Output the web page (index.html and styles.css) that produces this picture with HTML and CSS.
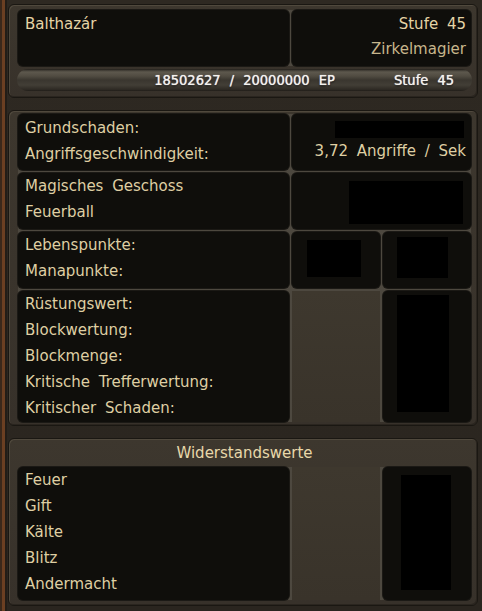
FILE: index.html
```html
<!DOCTYPE html>
<html lang="de">
<head>
<meta charset="utf-8">
<title>Charakter</title>
<link rel="stylesheet" href="styles.css">
</head>
<body>
<div class="page">
  <section class="frame head">
    <div class="head-grid">
      <div class="box name">Balthazár</div>
      <div class="box level">
        <div class="line">Stufe 45</div>
        <div class="line cls">Zirkelmagier</div>
      </div>
    </div>
    <div class="xpbar">
      <span class="xp">18502627 / 20000000 EP</span>
      <span class="lvl">Stufe 45</span>
    </div>
  </section>

  <section class="frame stats">
    <div class="grid">
      <div class="box left first">
        <div class="line">Grundschaden:</div>
        <div class="line">Angriffsgeschwindigkeit:</div>
      </div>
      <div class="box wide vals first">
        <div class="line"><div class="redact r1"></div></div>
        <div class="line">3,72 Angriffe / Sek</div>
      </div>

      <div class="box left">
        <div class="line">Magisches Geschoss</div>
        <div class="line">Feuerball</div>
      </div>
      <div class="box wide vals"><div class="redact r2"></div></div>

      <div class="box left">
        <div class="line">Lebenspunkte:</div>
        <div class="line">Manapunkte:</div>
      </div>
      <div class="box small"><div class="redact r3"></div></div>
      <div class="box small"><div class="redact r4"></div></div>

      <div class="box left">
        <div class="line">Rüstungswert:</div>
        <div class="line">Blockwertung:</div>
        <div class="line">Blockmenge:</div>
        <div class="line">Kritische Trefferwertung:</div>
        <div class="line">Kritischer Schaden:</div>
      </div>
      <div class="empty"></div>
      <div class="box small"><div class="redact r5"></div></div>
    </div>
  </section>

  <section class="frame resist">
    <div class="title">Widerstandswerte</div>
    <div class="grid rgrid">
      <div class="box left">
        <div class="line">Feuer</div>
        <div class="line">Gift</div>
        <div class="line">Kälte</div>
        <div class="line">Blitz</div>
        <div class="line">Andermacht</div>
      </div>
      <div class="empty"></div>
      <div class="box small"><div class="redact r6"></div></div>
    </div>
  </section>
</div>
</body>
</html>
```

FILE: styles.css
```css
html, body {
  margin: 0;
  padding: 0;
}
body {
  width: 482px;
  height: 611px;
  overflow: hidden;
  background:
    linear-gradient(to right, #3a281b 0, #3a281b 2px, #6b3f22 2px, #6b3f22 5px, #231d17 5px, #231d17 7px, transparent 7px),
    linear-gradient(#2e2922, #2a251f);
  font-family: "DejaVu Sans", "Liberation Sans", sans-serif;
  font-size: 15px;
  color: #dfcfa3;
  word-spacing: 4px;
}
.page {
  padding: 4px 4px 0 8px;
}
.frame {
  box-sizing: border-box;
  width: 470px;
  border: 1px solid #1a1712;
  border-radius: 6px;
  background: linear-gradient(#3d372e, #37312a);
  box-shadow: inset 1px 1px 0 #50493d, inset -1px -1px 0 #2a251f;
}
.head {
  padding: 5px 6px 6px 9px;
}
.head-grid {
  display: grid;
  grid-template-columns: 271px 1fr;
  gap: 3px;
  height: 56px;
  background: #4d483f;
  border-radius: 5px;
}
.box {
  background: #0f0e0b;
  border-radius: 5px;
  box-shadow: 0 0 0 1px #1b1915;
}
.name {
  padding: 2px 7px 0;
  line-height: 25px;
  color: #e5d4a6;
}
.level {
  padding: 2px 5px 0;
  text-align: right;
}
.level .line {
  line-height: 25px;
  color: #e5d4a6;
}
.level .cls {
  color: #c7b68c;
}
.xpbar {
  display: grid;
  grid-template-columns: 1fr auto 1fr;
  align-items: center;
  height: 22px;
  margin: 3px -1px 0 -1px;
  border-radius: 11px;
  background: linear-gradient(#1e1b17 0, #3a362f 1px, #5d584d 3px, #514c42 7px, #3a362f 11px, #423e36 16px, #2c2822 21px, #1e1b17 22px);
  font-family: "DejaVu Sans Condensed", "DejaVu Sans", sans-serif;
  font-size: 14.5px;
  color: #f4f2ee;
  text-shadow: 0 0 1px #fff, 0 1px 2px #000;
  word-spacing: 5px;
}
.xp {
  grid-column: 2;
}
.lvl {
  grid-column: 3;
  justify-self: end;
  padding-right: 18px;
}
.stats {
  margin-top: 12px;
  padding: 3px 6px 3px 9px;
}
.grid {
  display: grid;
  grid-template-columns: 271px 88px 88px;
  grid-template-rows: 56px 56px 56px 131px;
  gap: 3px;
  background: #4d483f;
  border-radius: 5px;
}
.left {
  padding: 0 7px;
}
.first {
  padding-top: 1px;
}
.line {
  line-height: 26px;
  white-space: nowrap;
}
.wide {
  grid-column: span 2;
}
.vals {
  padding: 0 5px;
  text-align: right;
  display: flex;
  flex-direction: column;
}
.vals.first {
  padding-top: 1px;
}
.redact {
  background: #000;
}
.r1 {
  width: 129px;
  height: 17px;
  margin: 6px 2px 0 auto;
}
.r2 {
  width: 114px;
  height: 43px;
  margin: 8px 3px 0 auto;
}
.small {
  padding: 0;
}
.r3 {
  width: 54px;
  height: 37px;
  margin: 8px 0 0 15px;
}
.r4 {
  width: 51px;
  height: 41px;
  margin: 5px 0 0 14px;
}
.r5 {
  width: 52px;
  height: 117px;
  margin: 4px 0 0 14px;
}
.r6 {
  width: 50px;
  height: 115px;
  margin: 8px 0 0 18px;
}
.empty {
  background: linear-gradient(#3e382e, #39332a);
}
.resist {
  margin-top: 12px;
  padding: 0 6px 5px 9px;
}
.title {
  text-align: center;
  line-height: 28px;
  color: #e8d8aa;
}
.rgrid {
  grid-template-rows: 133px;
}
```
